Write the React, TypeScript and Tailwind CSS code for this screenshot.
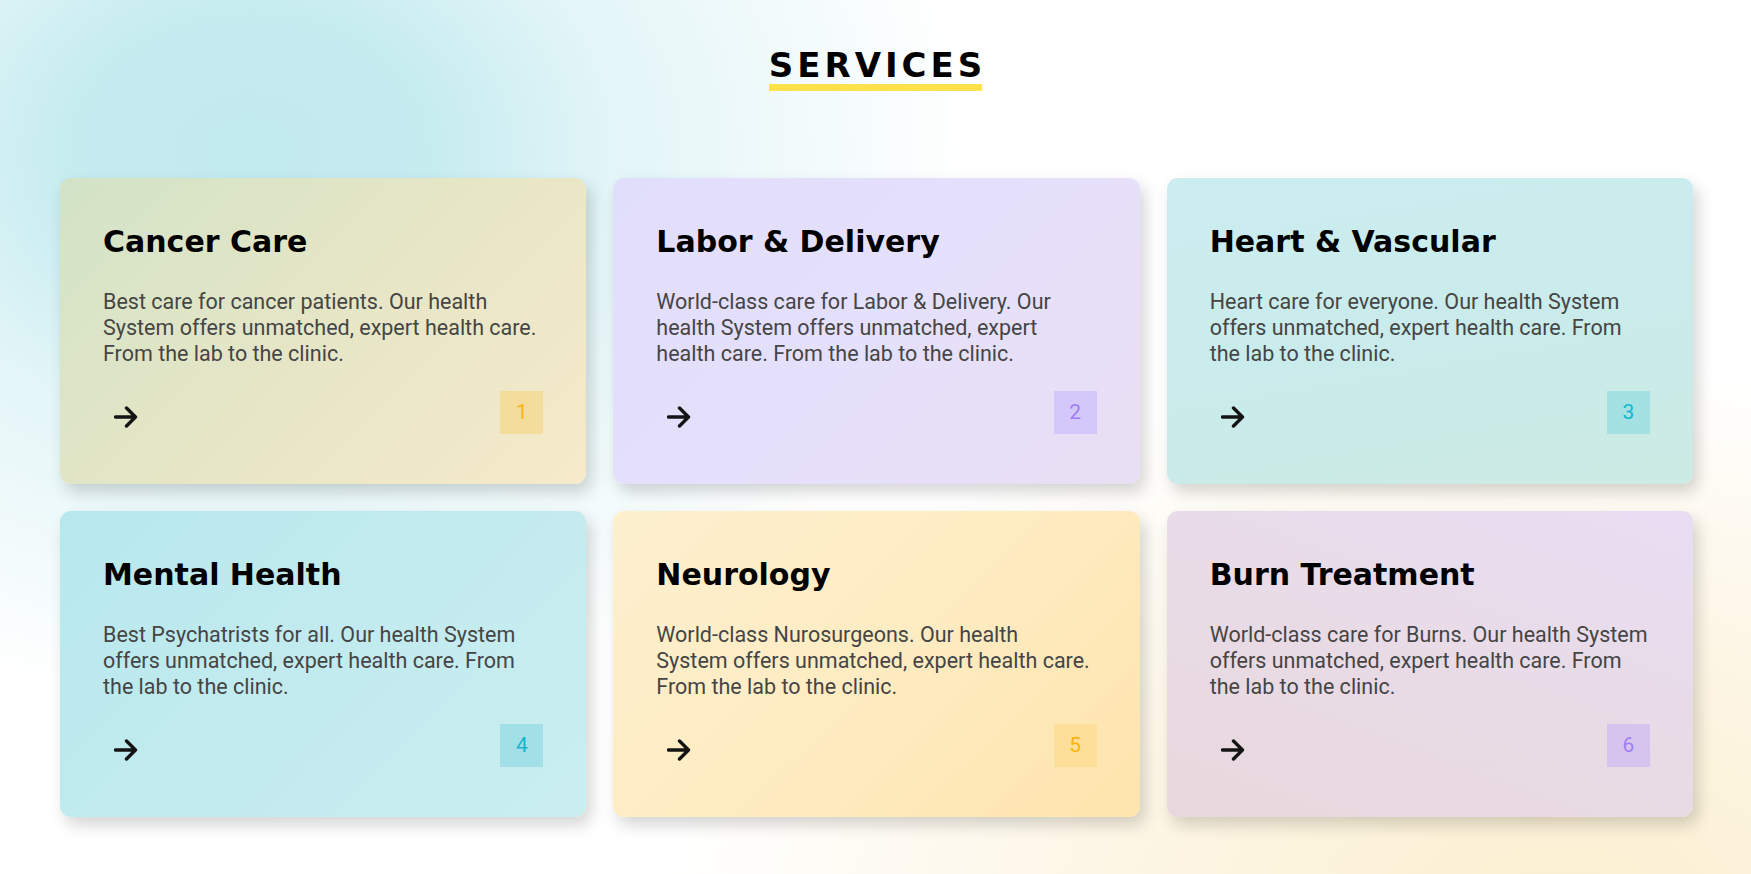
import React from 'react';

type Service = {
  title: string;
  text: string;
  num: number;
  card: string;
  box: string;
  textW?: string;
};

const services: Service[] = [
  {
    title: 'Cancer Care',
    text: 'Best care for cancer patients. Our health System offers unmatched, expert health care. From the lab to the clinic.',
    num: 1,
    card: 'bg-[linear-gradient(135deg,#d2e3c7_0%,#e6e6c6_50%,#f6eaca_100%)]',
    box: 'bg-[#f4dc9c] text-[#f8b510]',
  },
  {
    title: 'Labor & Delivery',
    text: 'World-class care for Labor & Delivery. Our health System offers unmatched, expert health care. From the lab to the clinic.',
    num: 2,
    card: 'bg-[linear-gradient(135deg,#e1defc_0%,#e5e0fb_50%,#e9dff4_100%)]',
    box: 'bg-[#d4c7fa] text-[#a07ef8]',
  },
  {
    title: 'Heart & Vascular',
    text: 'Heart care for everyone. Our health System offers unmatched, expert health care. From the lab to the clinic.',
    num: 3,
    card: 'bg-[linear-gradient(170deg,#cbedf0_0%,#c9ebea_60%,#cdebe4_100%)]',
    box: 'bg-[#a3e1e3] text-[#12b7cc]',
  },
  {
    title: 'Mental Health',
    text: 'Best Psychatrists for all. Our health System offers unmatched, expert health care. From the lab to the clinic.',
    num: 4,
    card: 'bg-[linear-gradient(135deg,#b7e8ed_0%,#c2ebef_50%,#caeef0_100%)]',
    box: 'bg-[#a0e0e6] text-[#12b7cc]',
  },
  {
    title: 'Neurology',
    text: 'World-class Nurosurgeons. Our health System offers unmatched, expert health care. From the lab to the clinic.',
    num: 5,
    card: 'bg-[linear-gradient(135deg,#fdf0cf_0%,#feebc0_55%,#fee4ad_100%)]',
    box: 'bg-[#fddf99] text-[#f8b510]',
    textW: 'max-w-[435px]',
  },
  {
    title: 'Burn Treatment',
    text: 'World-class care for Burns. Our health System offers unmatched, expert health care. From the lab to the clinic.',
    num: 6,
    card: 'bg-[linear-gradient(200deg,#e8ddf3_0%,#e9dbe6_50%,#e8d8dd_100%)]',
    box: 'bg-[#d7c4ee] text-[#a07ef8]',
  },
];

const Arrow = () => (
  <svg width="24" height="22" viewBox="0 0 24 22" fill="none">
    <path
      d="M1.5 11h20M12.5 2 21.5 11l-9 9"
      stroke="#141414"
      strokeWidth="3.4"
      strokeLinecap="round"
      strokeLinejoin="round"
    />
  </svg>
);

const ServiceCard = ({ s }: { s: Service }) => (
  <div
    className={`flex flex-col h-[306px] rounded-[11px] pt-[45px] px-[43px] shadow-[5px_8px_16px_rgba(0,0,0,0.17)] ${s.card}`}
  >
    <h3 className="font-['DejaVu_Sans',sans-serif] font-bold text-[30px] leading-[38px] text-black">
      {s.title}
    </h3>
    <p
      className={`mt-[28px] font-['Roboto',sans-serif] text-[21.5px] leading-[26px] text-[#454545] ${s.textW ?? ''}`}
    >
      {s.text}
    </p>
    <div className="flex flex-row items-center justify-between mt-[24px]">
      <button className="ml-[11px] mt-[8px]">
        <Arrow />
      </button>
      <div
        className={`w-[43px] h-[43px] flex items-center justify-center font-['Roboto',sans-serif] text-[21px] ${s.box}`}
      >
        {s.num}
      </div>
    </div>
  </div>
);

export default function App() {
  return (
    <div className="min-h-[874px] w-full bg-white bg-[radial-gradient(ellipse_720px_560px_at_250px_150px,#c2ebef_0%,#c6ecf0_25%,rgba(214,241,244,0.7)_50%,rgba(255,255,255,0)_100%),radial-gradient(ellipse_900px_560px_at_1560px_920px,#fcefd0_0%,rgba(252,243,220,0.75)_50%,rgba(255,255,255,0)_100%)]">
      <div className="flex flex-col items-center pt-[48px]">
        <div className="inline-flex flex-col">
          <h2 className="font-['DejaVu_Sans',sans-serif] font-bold text-[34px] leading-none tracking-[4px] mr-[-4px] text-black">
            SERVICES
          </h2>
          <div className="h-[7px] bg-[#ffe14c] mt-[2px]" />
        </div>
      </div>
      <div className="grid grid-cols-3 gap-[27px] pl-[60px] pr-[58px] mt-[87px]">
        {services.map((s) => (
          <ServiceCard key={s.num} s={s} />
        ))}
      </div>
    </div>
  );
}
